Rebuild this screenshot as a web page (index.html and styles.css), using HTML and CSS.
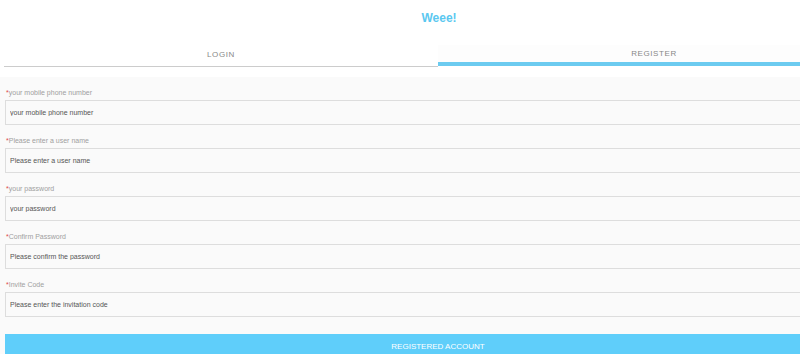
FILE: index.html
```html
<!DOCTYPE html>
<html lang="en">
<head>
    <meta charset="UTF-8">
    <meta name="viewport" content="width=device-width, initial-scale=1.0">
    <title>Weee! Register</title>
    <link rel="stylesheet" href="styles.css">
</head>
<body>
    <div class="page">
        <h1 class="brand">Weee!</h1>

        <div class="tabs">
            <div class="tab">LOGIN</div>
            <div class="tab active">REGISTER</div>
        </div>

        <form class="form">
            <div class="field">
                <label for="phone"><span class="req">*</span>your mobile phone number</label>
                <input type="text" id="phone" placeholder="your mobile phone number">
            </div>
            <div class="field">
                <label for="username"><span class="req">*</span>Please enter a user name</label>
                <input type="text" id="username" placeholder="Please enter a user name">
            </div>
            <div class="field">
                <label for="password"><span class="req">*</span>your password</label>
                <input type="password" id="password" placeholder="your password">
            </div>
            <div class="field">
                <label for="confirm"><span class="req">*</span>Confirm Password</label>
                <input type="password" id="confirm" placeholder="Please confirm the password">
            </div>
            <div class="field">
                <label for="invite"><span class="req">*</span>Invite Code</label>
                <input type="text" id="invite" placeholder="Please enter the invitation code">
            </div>

            <button type="button" class="submit">REGISTERED ACCOUNT</button>
        </form>
    </div>
</body>
</html>
```

FILE: styles.css
```css
body {
    margin: 0;
    font-family: "Liberation Sans", Arial, sans-serif;
    background-color: #fff;
    overflow: hidden;
}

.page {
    width: 100%;
}

.brand {
    margin: 0;
    height: 36px;
    line-height: 36px;
    text-align: center;
    font-size: 12px;
    font-weight: bold;
    color: #5bc8f0;
    padding-left: 78px;
}

.tabs {
    display: flex;
    margin-top: 9px;
    padding-left: 4px;
}

.tab {
    flex: 0 0 434px;
    height: 21px;
    line-height: 19px;
    text-align: center;
    font-size: 8px;
    letter-spacing: 0.6px;
    color: #888;
    border-bottom: 1px solid #ccc;
}

.tab.active {
    flex: 1;
    padding-left: 70px;
    line-height: 17px;
    height: 17px;
    border-bottom: 4px solid #6ccbf0;
    background-color: #fdfdfd;
}

.form {
    margin-top: 10px;
    padding: 8px 0 0 5px;
    background-color: #fafafa;
}

.field {
    margin-bottom: 8px;
}

label {
    display: block;
    height: 15px;
    line-height: 15px;
    font-size: 7px;
    color: #a0a0a0;
    padding-left: 1px;
}

.req {
    color: #e04848;
}

input {
    display: block;
    box-sizing: border-box;
    width: 100%;
    height: 25px;
    padding: 0 4px;
    border: 1px solid #ddd;
    border-right: none;
    background-color: #fafafa;
    font-family: inherit;
    font-size: 7px;
    color: #555;
    outline: none;
}

input::placeholder {
    color: #555;
}

.submit {
    display: block;
    width: 100%;
    height: 24px;
    margin-top: 17px;
    padding: 0 0 0 71px;
    border: none;
    background-color: #5fcefa;
    color: #fff;
    font-family: inherit;
    font-size: 8px;
    cursor: pointer;
}
```
